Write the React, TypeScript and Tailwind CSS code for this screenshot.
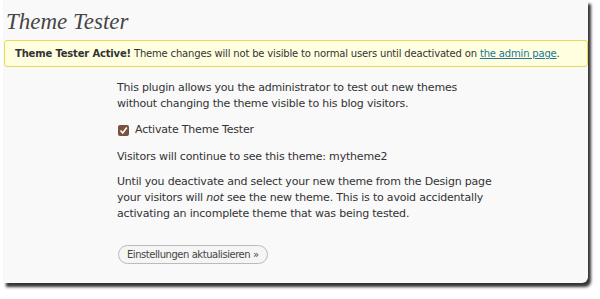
import React from "react";

export default function App() {
    return (
        <div className="w-[600px] h-[299px] bg-white overflow-hidden">
            <div className="ml-[3px] w-[585px] h-[283px] bg-[#f9f9f9] rounded-br-[6px] shadow-[3px_4px_3px_rgba(0,0,0,0.8)] text-[#333]" style={{ fontFamily: '"DejaVu Sans", Verdana, sans-serif' }}>
                <h2 className="pl-[3px] pt-[5px] h-[40px] text-[23px] italic text-[#464646]" style={{ fontFamily: '"Liberation Serif", Georgia, serif' }}>
                    Theme Tester
                </h2>

                {/* notice bar */}
                <div className="ml-[1px] h-[27px] leading-[25px] pl-[10px] bg-[#ffffe0] border border-[#e6db55] rounded-[3px] text-[10px] tracking-[-0.17px] whitespace-nowrap">
                    <span className="font-bold">Theme Tester Active!</span> Theme changes will not be visible to normal users until deactivated on{" "}
                    <a className="text-[#21759b] underline">the admin page</a>.
                </div>

                <div className="ml-[114px] mt-[13px] text-[11px] leading-[16px] tracking-[-0.2px]">
                    <p>
                        This plugin allows you the administrator to test out new themes
                        <br />
                        without changing the theme visible to his blog visitors.
                    </p>

                    <label className="mt-[10px] flex items-center gap-[6px]">
                        <span className="w-[11px] h-[11px] rounded-[2px] bg-[#7a5240] flex items-center justify-center ml-[1px]">
                            <svg width="9" height="9" viewBox="0 0 9 9">
                                <path d="M1.5 4.5 L3.7 7 L7.8 1.5" fill="none" stroke="#fff" strokeWidth="1.6" />
                            </svg>
                        </span>
                        Activate Theme Tester
                    </label>

                    <p className="mt-[11px]">Visitors will continue to see this theme: mytheme2</p>

                    <p className="mt-[9px]">
                        Until you deactivate and select your new theme from the Design page
                        <br />
                        your visitors will <em>not</em> see the new theme. This is to avoid accidentally
                        <br />
                        activating an incomplete theme that was being tested.
                    </p>

                    <button className="mt-[23px] ml-[1px] h-[19px] px-[8px] rounded-full border border-[#bbb] bg-[#f5f5f5] text-[10px] tracking-[-0.45px] text-[#464646]">
                        Einstellungen aktualisieren »
                    </button>
                </div>
            </div>
        </div>
    );
}
